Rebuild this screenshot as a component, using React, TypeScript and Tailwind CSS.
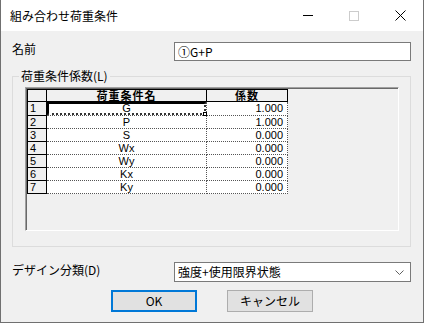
import React from 'react'

const rows = [
  { no: 1, name: 'G', coef: '1.000' },
  { no: 2, name: 'P', coef: '1.000' },
  { no: 3, name: 'S', coef: '0.000' },
  { no: 4, name: 'Wx', coef: '0.000' },
  { no: 5, name: 'Wy', coef: '0.000' },
  { no: 6, name: 'Kx', coef: '0.000' },
  { no: 7, name: 'Ky', coef: '0.000' },
]

const uiFont = { fontFamily: '"Noto Sans CJK JP", "Noto Sans", sans-serif' }
const gridFont = { fontFamily: '"Liberation Sans", "Noto Sans CJK JP", sans-serif' }

const TitleBar: React.FC = () => (
  <div className="h-[31px] bg-white flex items-center">
    <span className="pl-[9px] text-[12px] text-black flex-1 leading-none">組み合わせ荷重条件</span>
    <div className="w-[46px] h-full flex items-center justify-center">
      <div className="w-[10px] h-px bg-black" />
    </div>
    <div className="w-[46px] h-full flex items-center justify-center">
      <div className="w-[10px] h-[10px] border border-[#cccccc]" />
    </div>
    <div className="w-[46px] h-full flex items-center justify-center">
      <svg width="11" height="11" viewBox="0 0 11 11">
        <path d="M0.5 0.5 L10.5 10.5 M10.5 0.5 L0.5 10.5" stroke="#000" strokeWidth="1" />
      </svg>
    </div>
  </div>
)

const LoadGrid: React.FC = () => (
  <div className="ml-[12px] w-[374px] h-[144px] border-t border-l border-t-[#a0a0a0] border-l-[#a0a0a0] border-r border-b border-r-white border-b-white">
    <div className="w-full h-full border-t border-l border-[#696969] bg-[#f0f0f0]" style={gridFont}>
      <table className="border-collapse text-[11px] leading-none text-black">
        <thead>
          <tr className="h-[12px]">
            <th className="w-[19px] border border-black bg-[#f0f0f0] p-0" />
            <th className="w-[160px] border border-black bg-[#f0f0f0] p-0 font-bold text-[11px] tracking-[1px]" style={uiFont}>荷重条件名</th>
            <th className="w-[81px] border border-black bg-[#f0f0f0] p-0 font-bold text-[11px] tracking-[1px]" style={uiFont}>係数</th>
          </tr>
        </thead>
        <tbody>
          {rows.map((r) => (
            <tr key={r.no} className="h-[13px]">
              <td className="border border-black bg-[#f0f0f0] p-0 pl-[2px] text-left align-middle">{r.no}</td>
              <td className="border-b border-r border-dotted border-[#555555] bg-white p-0 text-center align-middle">
                {r.no === 1 ? (
                  <div className="relative h-[13px] border-t-2 border-l-2 border-black border-r-2 border-b-2 border-r-[#333] border-b-[#333] border-dotted flex items-center justify-center" style={{ borderTopStyle: 'solid', borderLeftStyle: 'solid' }}>
                    {r.name}
                    <div className="absolute -right-[3px] -bottom-[3px] w-[4px] h-[4px] bg-white border border-black" />
                  </div>
                ) : (
                  r.name
                )}
              </td>
              <td className="border-b border-r border-dotted border-[#555555] bg-white p-0 pr-[4px] text-right align-middle">{r.coef}</td>
            </tr>
          ))}
        </tbody>
      </table>
    </div>
  </div>
)

export default function App() {
  return (
    <div className="w-[424px] h-[323px] bg-[#f0f0f0] border-l border-r border-b border-[#707070] flex flex-col text-black" style={uiFont}>
      <TitleBar />

      <div className="flex-1 flex flex-col pl-[11px] pr-[12px]">
        {/* 名前 */}
        <div className="flex mt-[11px] h-[19px]">
          <span className="text-[12px] leading-none pt-[1px] w-[162px]">名前</span>
          <div className="w-[237px] h-[19px] border border-[#7a7a7a] bg-white flex items-center pl-[3px] text-[12px] leading-none">
            ①G+P
          </div>
        </div>

        {/* 荷重条件係数 */}
        <fieldset className="mt-[8px] w-[399px] h-[178px] border border-[#dcdcdc] px-0 pt-[4px] m-0 min-w-0">
          <legend className="ml-[6px] px-[2px] text-[12px] leading-[14px]">荷重条件係数(L)</legend>
          <LoadGrid />
        </fieldset>

        {/* デザイン分類 */}
        <div className="flex mt-[15px] h-[20px]">
          <span className="text-[12px] leading-none pt-[2px] w-[162px]">デザイン分類(D)</span>
          <div className="w-[237px] h-[20px] border border-[#7a7a7a] bg-white flex items-center pl-[3px] pr-[6px] text-[12px] leading-none">
            <span className="flex-1">強度+使用限界状態</span>
            <svg width="9" height="5" viewBox="0 0 9 5">
              <path d="M0.5 0.5 L4.5 4.5 L8.5 0.5" stroke="#606060" strokeWidth="1" fill="none" />
            </svg>
          </div>
        </div>

        {/* buttons */}
        <div className="flex justify-center gap-[30px] mt-[8px] pl-[1px]">
          <button className="w-[86px] h-[22px] bg-[#e1e1e1] border-2 border-[#0078d7] text-[12px] leading-none">OK</button>
          <button className="w-[86px] h-[22px] bg-[#e1e1e1] border border-[#adadad] text-[12px] leading-none">キャンセル</button>
        </div>
      </div>
    </div>
  )
}
